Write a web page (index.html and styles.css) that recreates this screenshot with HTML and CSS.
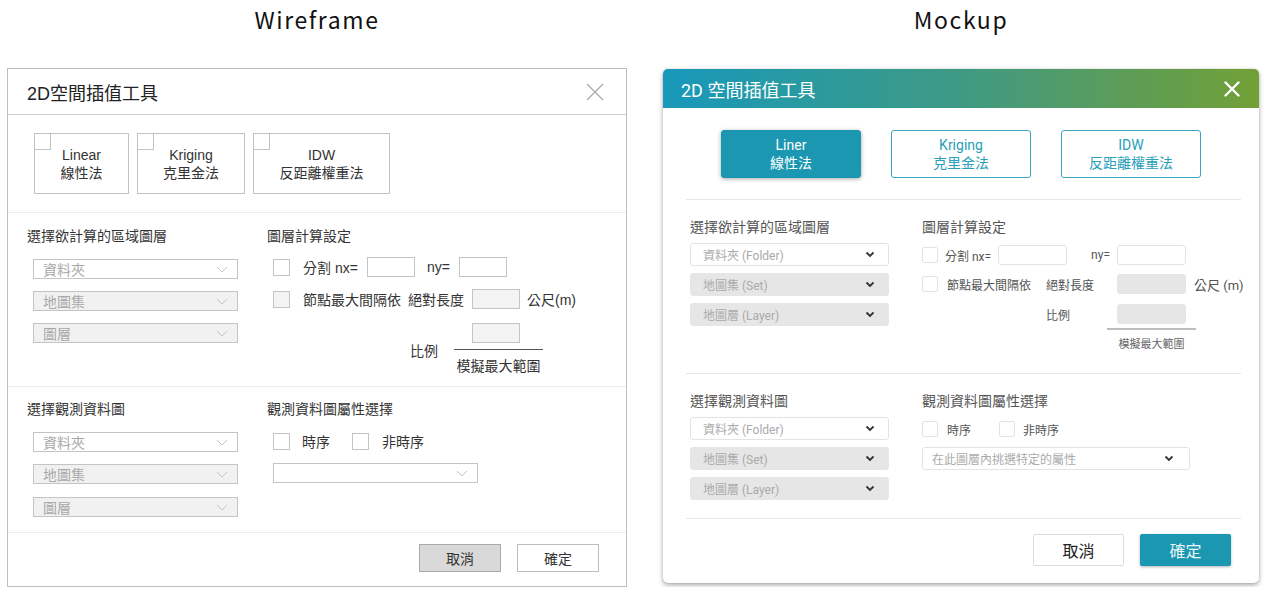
FILE: index.html
```html
<!DOCTYPE html>
<html lang="zh-Hant">
<head>
<meta charset="utf-8">
<title>2D空間插值工具</title>
<link rel="stylesheet" href="styles.css">
</head>
<body>
<div class="page">
  <section class="panel panel-wire">
    <h2 class="panel-title">Wireframe</h2>
    <div class="wf-dialog">
      <div class="wf-header">
        <span class="wf-title">2D空間插值工具</span>
        <svg class="wf-close" width="18" height="18" viewBox="0 0 18 18"><path d="M1 1L17 17M17 1L1 17" stroke="#a8a8a8" stroke-width="1.2" fill="none"/></svg>
      </div>
      <div class="wf-methods">
        <div class="wf-method wf-m-linear"><span class="wf-corner"></span><span>Linear</span><span>線性法</span></div>
        <div class="wf-method wf-m-kriging"><span class="wf-corner"></span><span>Kriging</span><span>克里金法</span></div>
        <div class="wf-method wf-m-idw"><span class="wf-corner"></span><span>IDW</span><span>反距離權重法</span></div>
      </div>

      <div class="wf-section wf-sec1">
        <div class="wf-col-left">
          <div class="wf-heading">選擇欲計算的區域圖層</div>
          <div class="wf-selects">
            <div class="wf-select"><span>資料夾</span><svg width="12" height="7" viewBox="0 0 12 7"><path d="M1 1l5 5 5-5" stroke="#c4c4c4" stroke-width="1" fill="none"/></svg></div>
            <div class="wf-select is-off"><span>地圖集</span><svg width="12" height="7" viewBox="0 0 12 7"><path d="M1 1l5 5 5-5" stroke="#c4c4c4" stroke-width="1" fill="none"/></svg></div>
            <div class="wf-select is-off"><span>圖層</span><svg width="12" height="7" viewBox="0 0 12 7"><path d="M1 1l5 5 5-5" stroke="#c4c4c4" stroke-width="1" fill="none"/></svg></div>
          </div>
        </div>
        <div class="wf-col-right">
          <div class="wf-heading">圖層計算設定</div>
          <div class="wf-row wf-row-split">
            <span class="wf-check"></span>
            <span class="wf-lbl-split">分割 nx=</span>
            <span class="wf-input"></span>
            <span class="wf-lbl-ny">ny=</span>
            <span class="wf-input"></span>
          </div>
          <div class="wf-row wf-row-node">
            <span class="wf-check is-off"></span>
            <span class="wf-lbl-node">節點最大間隔依</span>
            <span class="wf-lbl-abs">絕對長度</span>
            <span class="wf-input is-off"></span>
            <span class="wf-lbl-unit">公尺(m)</span>
          </div>
          <div class="wf-row-ratio">
            <span class="wf-lbl-ratio">比例</span>
            <div class="wf-fraction">
              <span class="wf-input is-off"></span>
              <span class="wf-fraction-line"></span>
              <span class="wf-fraction-cap">模擬最大範圍</span>
            </div>
          </div>
        </div>
      </div>

      <div class="wf-section wf-sec2">
        <div class="wf-col-left">
          <div class="wf-heading">選擇觀測資料圖</div>
          <div class="wf-selects">
            <div class="wf-select"><span>資料夾</span><svg width="12" height="7" viewBox="0 0 12 7"><path d="M1 1l5 5 5-5" stroke="#c4c4c4" stroke-width="1" fill="none"/></svg></div>
            <div class="wf-select is-off"><span>地圖集</span><svg width="12" height="7" viewBox="0 0 12 7"><path d="M1 1l5 5 5-5" stroke="#c4c4c4" stroke-width="1" fill="none"/></svg></div>
            <div class="wf-select is-off"><span>圖層</span><svg width="12" height="7" viewBox="0 0 12 7"><path d="M1 1l5 5 5-5" stroke="#c4c4c4" stroke-width="1" fill="none"/></svg></div>
          </div>
        </div>
        <div class="wf-col-right">
          <div class="wf-heading">觀測資料圖屬性選擇</div>
          <div class="wf-row wf-row-time">
            <span class="wf-check"></span>
            <span class="wf-lbl-time">時序</span>
            <span class="wf-check"></span>
            <span class="wf-lbl-nontime">非時序</span>
          </div>
          <div class="wf-select wf-attr"><span></span><svg width="12" height="7" viewBox="0 0 12 7"><path d="M1 1l5 5 5-5" stroke="#c4c4c4" stroke-width="1" fill="none"/></svg></div>
        </div>
      </div>

      <div class="wf-footer">
        <span class="wf-btn wf-btn-cancel">取消</span>
        <span class="wf-btn wf-btn-ok">確定</span>
      </div>
    </div>
  </section>

  <section class="panel panel-mock">
    <h2 class="panel-title">Mockup</h2>
    <div class="mk-dialog">
      <div class="mk-header">
        <span class="mk-title">2D 空間插值工具</span>
        <svg class="mk-close" width="16" height="16" viewBox="0 0 16 16"><path d="M1.5 1.5L14.5 14.5M14.5 1.5L1.5 14.5" stroke="#ffffff" stroke-width="2.4" fill="none" stroke-linecap="round"/></svg>
      </div>
      <div class="mk-methods">
        <div class="mk-method is-active"><span>Liner</span><span>線性法</span></div>
        <div class="mk-method"><span>Kriging</span><span>克里金法</span></div>
        <div class="mk-method"><span>IDW</span><span>反距離權重法</span></div>
      </div>

      <div class="mk-section mk-sec1">
        <div class="mk-col-left">
          <div class="mk-heading">選擇欲計算的區域圖層</div>
          <div class="mk-selects">
            <div class="mk-select"><span>資料夾 (Folder)</span><svg width="10" height="7" viewBox="0 0 10 7"><path d="M1.5 1.5l3.5 3.5 3.5-3.5" stroke="#333" stroke-width="1.8" fill="none"/></svg></div>
            <div class="mk-select is-off"><span>地圖集 (Set)</span><svg width="10" height="7" viewBox="0 0 10 7"><path d="M1.5 1.5l3.5 3.5 3.5-3.5" stroke="#333" stroke-width="1.8" fill="none"/></svg></div>
            <div class="mk-select is-off"><span>地圖層 (Layer)</span><svg width="10" height="7" viewBox="0 0 10 7"><path d="M1.5 1.5l3.5 3.5 3.5-3.5" stroke="#333" stroke-width="1.8" fill="none"/></svg></div>
          </div>
        </div>
        <div class="mk-col-right">
          <div class="mk-heading">圖層計算設定</div>
          <div class="mk-row mk-row-split">
            <span class="mk-check"></span>
            <span class="mk-lbl-split">分割 nx=</span>
            <span class="mk-input"></span>
            <span class="mk-lbl-ny">ny=</span>
            <span class="mk-input"></span>
          </div>
          <div class="mk-row mk-row-node">
            <span class="mk-check"></span>
            <span class="mk-lbl-node">節點最大間隔依</span>
            <span class="mk-lbl-abs">絕對長度</span>
            <span class="mk-input is-off"></span>
            <span class="mk-lbl-unit">公尺 (m)</span>
          </div>
          <div class="mk-row mk-row-ratio">
            <span class="mk-lbl-ratio">比例</span>
            <span class="mk-input is-off"></span>
          </div>
          <div class="mk-fraction">
            <span class="mk-fraction-line"></span>
            <span class="mk-fraction-cap">模擬最大範圍</span>
          </div>
        </div>
      </div>

      <div class="mk-section mk-sec2">
        <div class="mk-col-left">
          <div class="mk-heading">選擇觀測資料圖</div>
          <div class="mk-selects">
            <div class="mk-select"><span>資料夾 (Folder)</span><svg width="10" height="7" viewBox="0 0 10 7"><path d="M1.5 1.5l3.5 3.5 3.5-3.5" stroke="#333" stroke-width="1.8" fill="none"/></svg></div>
            <div class="mk-select is-off"><span>地圖集 (Set)</span><svg width="10" height="7" viewBox="0 0 10 7"><path d="M1.5 1.5l3.5 3.5 3.5-3.5" stroke="#333" stroke-width="1.8" fill="none"/></svg></div>
            <div class="mk-select is-off"><span>地圖層 (Layer)</span><svg width="10" height="7" viewBox="0 0 10 7"><path d="M1.5 1.5l3.5 3.5 3.5-3.5" stroke="#333" stroke-width="1.8" fill="none"/></svg></div>
          </div>
        </div>
        <div class="mk-col-right">
          <div class="mk-heading">觀測資料圖屬性選擇</div>
          <div class="mk-row mk-row-time">
            <span class="mk-check"></span>
            <span class="mk-lbl-time">時序</span>
            <span class="mk-check"></span>
            <span class="mk-lbl-nontime">非時序</span>
          </div>
          <div class="mk-select mk-attr"><span>在此圖層內挑選特定的屬性</span><svg width="10" height="7" viewBox="0 0 10 7"><path d="M1.5 1.5l3.5 3.5 3.5-3.5" stroke="#333" stroke-width="1.8" fill="none"/></svg></div>
        </div>
      </div>

      <div class="mk-footer">
        <span class="mk-btn mk-btn-cancel">取消</span>
        <span class="mk-btn mk-btn-ok">確定</span>
      </div>
    </div>
  </section>
</div>
</body>
</html>
```

FILE: styles.css
```css
* { box-sizing: border-box; }

body {
  margin: 0;
  background: #ffffff;
  font-family: "Liberation Sans", "Noto Sans CJK TC", sans-serif;
  color: #333;
}

.page {
  display: flex;
  align-items: flex-start;
  padding-left: 7px;
  gap: 36px;
}

.panel-wire { width: 620px; }
.panel-mock { width: 596px; }

.panel-title {
  margin: 0;
  height: 38px;
  line-height: 38px;
  text-align: center;
  font-family: "Noto Sans CJK TC", "Noto Sans", sans-serif;
  font-weight: 400;
  font-size: 23px;
  letter-spacing: 1.6px;
  color: #111;
}

/* ---------------- Wireframe ---------------- */
.wf-dialog {
  margin-top: 30px;
  border: 1px solid #bdbdbd;
  background: #fff;
  font-family: "Liberation Sans", "Noto Sans CJK TC", sans-serif;
}

.wf-header {
  height: 46px;
  border-bottom: 1px solid #cfcfcf;
  display: flex;
  align-items: center;
  justify-content: space-between;
  padding: 0 22px 0 19px;
}
.wf-title { font-size: 18px; color: #222; }
.wf-close { display: block; }

.wf-methods {
  display: flex;
  gap: 8px;
  padding: 18px 0 18px 26px;
}
.wf-method {
  position: relative;
  height: 61px;
  border: 1px solid #c2c2c2;
  display: flex;
  flex-direction: column;
  align-items: center;
  justify-content: center;
  font-size: 14px;
  line-height: 18px;
  color: #333;
}
.wf-m-linear { width: 95px; }
.wf-m-kriging { width: 108px; }
.wf-m-idw { width: 137px; }
.wf-corner {
  position: absolute;
  left: -1px;
  top: -1px;
  width: 17px;
  height: 17px;
  border: 1px solid #c2c2c2;
}

.wf-section {
  display: flex;
  border-top: 1px solid #ececec;
  padding-left: 19px;
}
.wf-sec1 { padding-top: 13px; padding-bottom: 11px; }
.wf-sec2 { padding-top: 12px; padding-bottom: 15px; }

.wf-col-left { width: 240px; }
.wf-col-right { flex: 1; }

.wf-heading {
  font-size: 14px;
  line-height: 20px;
  color: #333;
}

.wf-selects {
  display: flex;
  flex-direction: column;
  gap: 12px;
  margin-top: 13px;
  margin-left: 6px;
}
.wf-sec2 .wf-selects .wf-select:last-child { margin-top: 1px; }

.wf-select {
  width: 205px;
  height: 20px;
  border: 1px solid #c4c4c4;
  background: #fff;
  display: flex;
  align-items: center;
  justify-content: space-between;
  padding: 0 9px 0 9px;
  font-size: 14px;
  color: #a8a8a8;
}
.wf-select.is-off { background: #f1f1f1; }
.wf-select svg { display: block; }

.wf-row {
  display: flex;
  align-items: center;
  height: 20px;
  margin-left: 6px;
  font-size: 14px;
  color: #333;
  white-space: nowrap;
}
.wf-row-split { margin-top: 11px; }
.wf-row-node { margin-top: 12px; }
.wf-row-time { margin-top: 12px; }

.wf-check {
  width: 17px;
  height: 17px;
  border: 1px solid #c4c4c4;
  background: #fff;
  flex: none;
}
.wf-check.is-off { background: #f3f3f3; }

.wf-input {
  display: block;
  width: 48px;
  height: 20px;
  border: 1px solid #c4c4c4;
  background: #fff;
  flex: none;
}
.wf-input.is-off { background: #f3f3f3; }

.wf-lbl-split { margin-left: 13px; width: 64px; }
.wf-lbl-ny { margin-left: 12px; width: 32px; }
.wf-lbl-node { margin-left: 13px; width: 105px; }
.wf-lbl-abs { width: 64px; }
.wf-lbl-unit { margin-left: 7px; }
.wf-lbl-time { margin-left: 12px; width: 50px; }
.wf-lbl-nontime { margin-left: 13px; }

.wf-row-ratio {
  display: flex;
  margin-top: 14px;
  margin-left: 143px;
  font-size: 14px;
  color: #333;
}
.wf-lbl-ratio {
  margin-top: 19px;
  line-height: 18px;
  width: 44px;
}
.wf-fraction {
  width: 89px;
  display: flex;
  flex-direction: column;
  align-items: center;
}
.wf-fraction .wf-input { margin-right: 5px; }
.wf-fraction-line {
  display: block;
  width: 89px;
  height: 1px;
  background: #555;
  margin-top: 6px;
}
.wf-fraction-cap {
  margin-top: 7px;
  line-height: 18px;
  font-size: 14px;
  white-space: nowrap;
}

.wf-attr {
  margin-top: 12px;
  margin-left: 6px;
}

.wf-footer {
  border-top: 1px solid #ececec;
  display: flex;
  justify-content: flex-end;
  gap: 16px;
  padding: 11px 27px 14px 0;
}
.wf-btn {
  width: 82px;
  height: 28px;
  border: 1px solid #bdbdbd;
  display: flex;
  align-items: center;
  justify-content: center;
  font-size: 14px;
  color: #333;
  background: #fff;
}
.wf-btn-cancel { background: #d9d9d9; border-color: #a9a9a9; }

/* ---------------- Mockup ---------------- */
.mk-dialog {
  margin-top: 31px;
  background: #fff;
  border-radius: 5px;
  box-shadow: 0 2px 5px rgba(0, 0, 0, 0.35), 0 0 1px rgba(0, 0, 0, 0.25);
  font-family: Roboto, "Noto Sans CJK TC", sans-serif;
  overflow: hidden;
}

.mk-header {
  height: 39px;
  display: flex;
  align-items: center;
  justify-content: space-between;
  padding: 0 19px 0 18px;
  background: linear-gradient(90deg, #1898bb 0%, #2a9a9e 25%, #3f9a84 50%, #5a9c5c 75%, #72a035 100%);
}
.mk-title { font-size: 18px; color: #fff; }
.mk-close { display: block; }

.mk-methods {
  display: flex;
  justify-content: center;
  gap: 30px;
  padding: 22px 0 21px 0;
}
.mk-method {
  width: 140px;
  height: 48px;
  border: 1px solid #3aa7bf;
  border-radius: 3px;
  display: flex;
  flex-direction: column;
  align-items: center;
  justify-content: center;
  font-size: 14px;
  line-height: 18px;
  color: #2aa0ba;
  background: #fff;
}
.mk-method.is-active {
  background: #1b97b1;
  border-color: #1b97b1;
  color: #fff;
  box-shadow: 0 1px 4px rgba(0, 0, 0, 0.35);
}

.mk-section {
  display: flex;
  margin: 0 18px 0 23px;
  padding-left: 4px;
  border-top: 1px solid #e6e6e6;
}
.mk-sec1 { padding-top: 17px; padding-bottom: 20px; }
.mk-sec2 { padding-top: 17px; padding-bottom: 18px; }

.mk-col-left { width: 232px; flex: none; }
.mk-col-right { flex: 1; }

.mk-heading {
  font-size: 14px;
  line-height: 20px;
  color: #555;
}

.mk-selects {
  display: flex;
  flex-direction: column;
  gap: 7px;
  margin-top: 6px;
}
.mk-select {
  width: 199px;
  height: 23px;
  border: 1px solid #e3e3e3;
  border-radius: 3px;
  background: #fff;
  display: flex;
  align-items: center;
  justify-content: space-between;
  padding: 0 13px 0 12px;
  font-size: 12px;
  color: #aaa;
}
.mk-select.is-off { background: #e6e6e6; border-color: #e6e6e6; }
.mk-select svg { display: block; }

.mk-row {
  display: flex;
  align-items: center;
  height: 20px;
  font-size: 12px;
  color: #555;
  white-space: nowrap;
}
.mk-row-split { margin-top: 8px; }
.mk-row-node { margin-top: 9px; }
.mk-row-ratio { margin-top: 10px; padding-left: 124px; }
.mk-row-time { margin-top: 8px; }

.mk-check {
  width: 16px;
  height: 16px;
  border: 1px solid #e3e3e3;
  border-radius: 2px;
  background: #fff;
  flex: none;
}

.mk-input {
  display: block;
  width: 69px;
  height: 20px;
  border: 1px solid #e3e3e3;
  border-radius: 3px;
  background: #fff;
  flex: none;
}
.mk-input.is-off { background: #e6e6e6; border-color: #e6e6e6; }

.mk-lbl-split { margin-left: 7px; width: 53px; flex: none; }
.mk-lbl-ny { width: 50px; text-align: right; padding-right: 7px; flex: none; }
.mk-lbl-node { margin-left: 9px; width: 99px; flex: none; }
.mk-lbl-abs { width: 71px; flex: none; }
.mk-lbl-unit { margin-left: 8px; font-size: 13px; flex: none; }
.mk-lbl-ratio { width: 71px; flex: none; }
.mk-lbl-time { margin-left: 9px; width: 52px; flex: none; }
.mk-lbl-nontime { margin-left: 8px; }

.mk-fraction {
  margin-left: 185px;
  width: 89px;
  display: flex;
  flex-direction: column;
  align-items: center;
}
.mk-fraction-line {
  display: block;
  width: 89px;
  height: 2px;
  background: #bdbdbd;
  margin-top: 4px;
}
.mk-fraction-cap {
  margin-top: 7px;
  font-size: 11px;
  line-height: 16px;
  color: #666;
  white-space: nowrap;
}

.mk-attr {
  width: 268px;
  margin-top: 8px;
  padding-left: 9px;
  padding-right: 15px;
}

.mk-footer {
  margin: 0 18px 0 23px;
  border-top: 1px solid #e6e6e6;
  display: flex;
  justify-content: flex-end;
  gap: 16px;
  padding: 15px 10px 17px 0;
}
.mk-btn {
  width: 91px;
  height: 32px;
  border-radius: 2px;
  display: flex;
  align-items: center;
  justify-content: center;
  font-size: 16px;
}
.mk-btn-cancel {
  border: 1px solid #dcdcdc;
  background: #fff;
  color: #222;
}
.mk-btn-ok {
  background: #1b97b1;
  color: #eaf6f8;
  box-shadow: 0 1px 3px rgba(0, 0, 0, 0.3);
}
```
